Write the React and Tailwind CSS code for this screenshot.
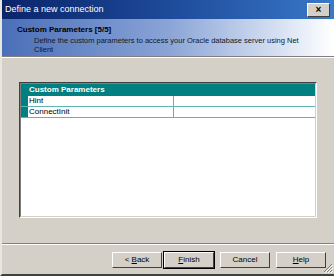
import React from 'react';

const font = { fontFamily: '"Liberation Sans", Arial, sans-serif' };

const Button = ({ label, u, rest, bold }) => (
  <button
    className={`w-[50px] h-[16px] bg-[#D4D0C8] text-[8px] leading-none text-black flex items-center justify-center border border-t-white border-l-white border-r-[#404040] border-b-[#404040] ${bold ? 'outline outline-1 outline-black' : ''}`}
  >
    <span>
      {label}
      <span className="underline">{u}</span>
      {rest}
    </span>
  </button>
);

export default function App() {
  return (
    <div className="w-[334px] h-[276px] bg-[#D4D0C8] flex flex-col border-l-2 border-l-[#E8E6E0] border-b-2 border-b-[#404040] overflow-hidden" style={font}>
      {/* Title bar */}
      <div className="h-[19px] shrink-0 flex items-center justify-between pl-[3px] pr-[4px] bg-gradient-to-r from-[#0A246A] via-[#1E4A9A] to-[#3A78C8]">
        <span className="text-white text-[9px]">Define a new connection</span>
        <div className="w-[23px] h-[14px] bg-[#D4D0C8] border border-t-white border-l-white border-r-[#404040] border-b-[#404040] flex items-center justify-center text-[10px] font-bold leading-none text-black">
          ×
        </div>
      </div>

      {/* Header */}
      <div className="h-[38px] shrink-0 bg-gradient-to-r from-[#4A6EB8] via-[#8AA4D6] to-white pl-[15px] pt-[6px] border-b border-b-[#808080]">
        <div className="text-[8px] font-bold text-black leading-[10px]">Custom Parameters [5/5]</div>
        <div className="text-[7.5px] text-[#101828] leading-[9px] pl-[17px] pr-[30px] mt-[1px]">
          Define the custom parameters to access your Oracle database server using Net Client
        </div>
      </div>
      <div className="h-px bg-white shrink-0" />

      {/* Body */}
      <div className="flex-1 px-[17px] pt-[24px] pb-[25px] flex flex-col">
        <div className="flex-1 bg-white border border-t-[#404040] border-l-[#404040] border-r-white border-b-white">
          <div className="border border-t-[#808080] border-l-[#808080] border-r-[#D4D0C8] border-b-[#D4D0C8] h-full">
            <div className="h-[12px] bg-[#008080] text-white text-[8px] font-bold leading-[12px] pl-[8px]">
              Custom Parameters
            </div>
            {['Hint', 'ConnectInit'].map((r) => (
              <div key={r} className="flex h-[11px] border-b border-b-[#5FB3B3]">
                <div className="w-[7px] bg-[#008080]" />
                <div className="w-[146px] text-[8px] leading-[10px] pl-[1px] border-r border-r-[#5FB3B3] text-black">{r}</div>
                <div className="flex-1" />
              </div>
            ))}
          </div>
        </div>
      </div>

      {/* Footer */}
      <div className="h-px bg-[#808080] shrink-0" />
      <div className="h-px bg-white shrink-0" />
      <div className="h-[29px] shrink-0 flex items-start justify-end pt-[7px] pr-[8px] relative">
        <div className="flex gap-[6px]">
          <div className="flex gap-[2px]">
            <Button label={'<\u00a0'} u="B" rest="ack" />
            <Button label="" u="F" rest="inish" bold />
          </div>
          <Button label="Cancel" u="" rest="" />
          <Button label="" u="H" rest="elp" />
        </div>
        <svg className="absolute right-[1px] bottom-[1px]" width="10" height="10" viewBox="0 0 10 10">
          <path d="M9 1 L1 9 M9 4 L4 9 M9 7 L7 9" stroke="#808080" strokeWidth="1" />
          <path d="M10 2 L2 10 M10 5 L5 10 M10 8 L8 10" stroke="#ffffff" strokeWidth="1" />
        </svg>
      </div>
    </div>
  );
}
